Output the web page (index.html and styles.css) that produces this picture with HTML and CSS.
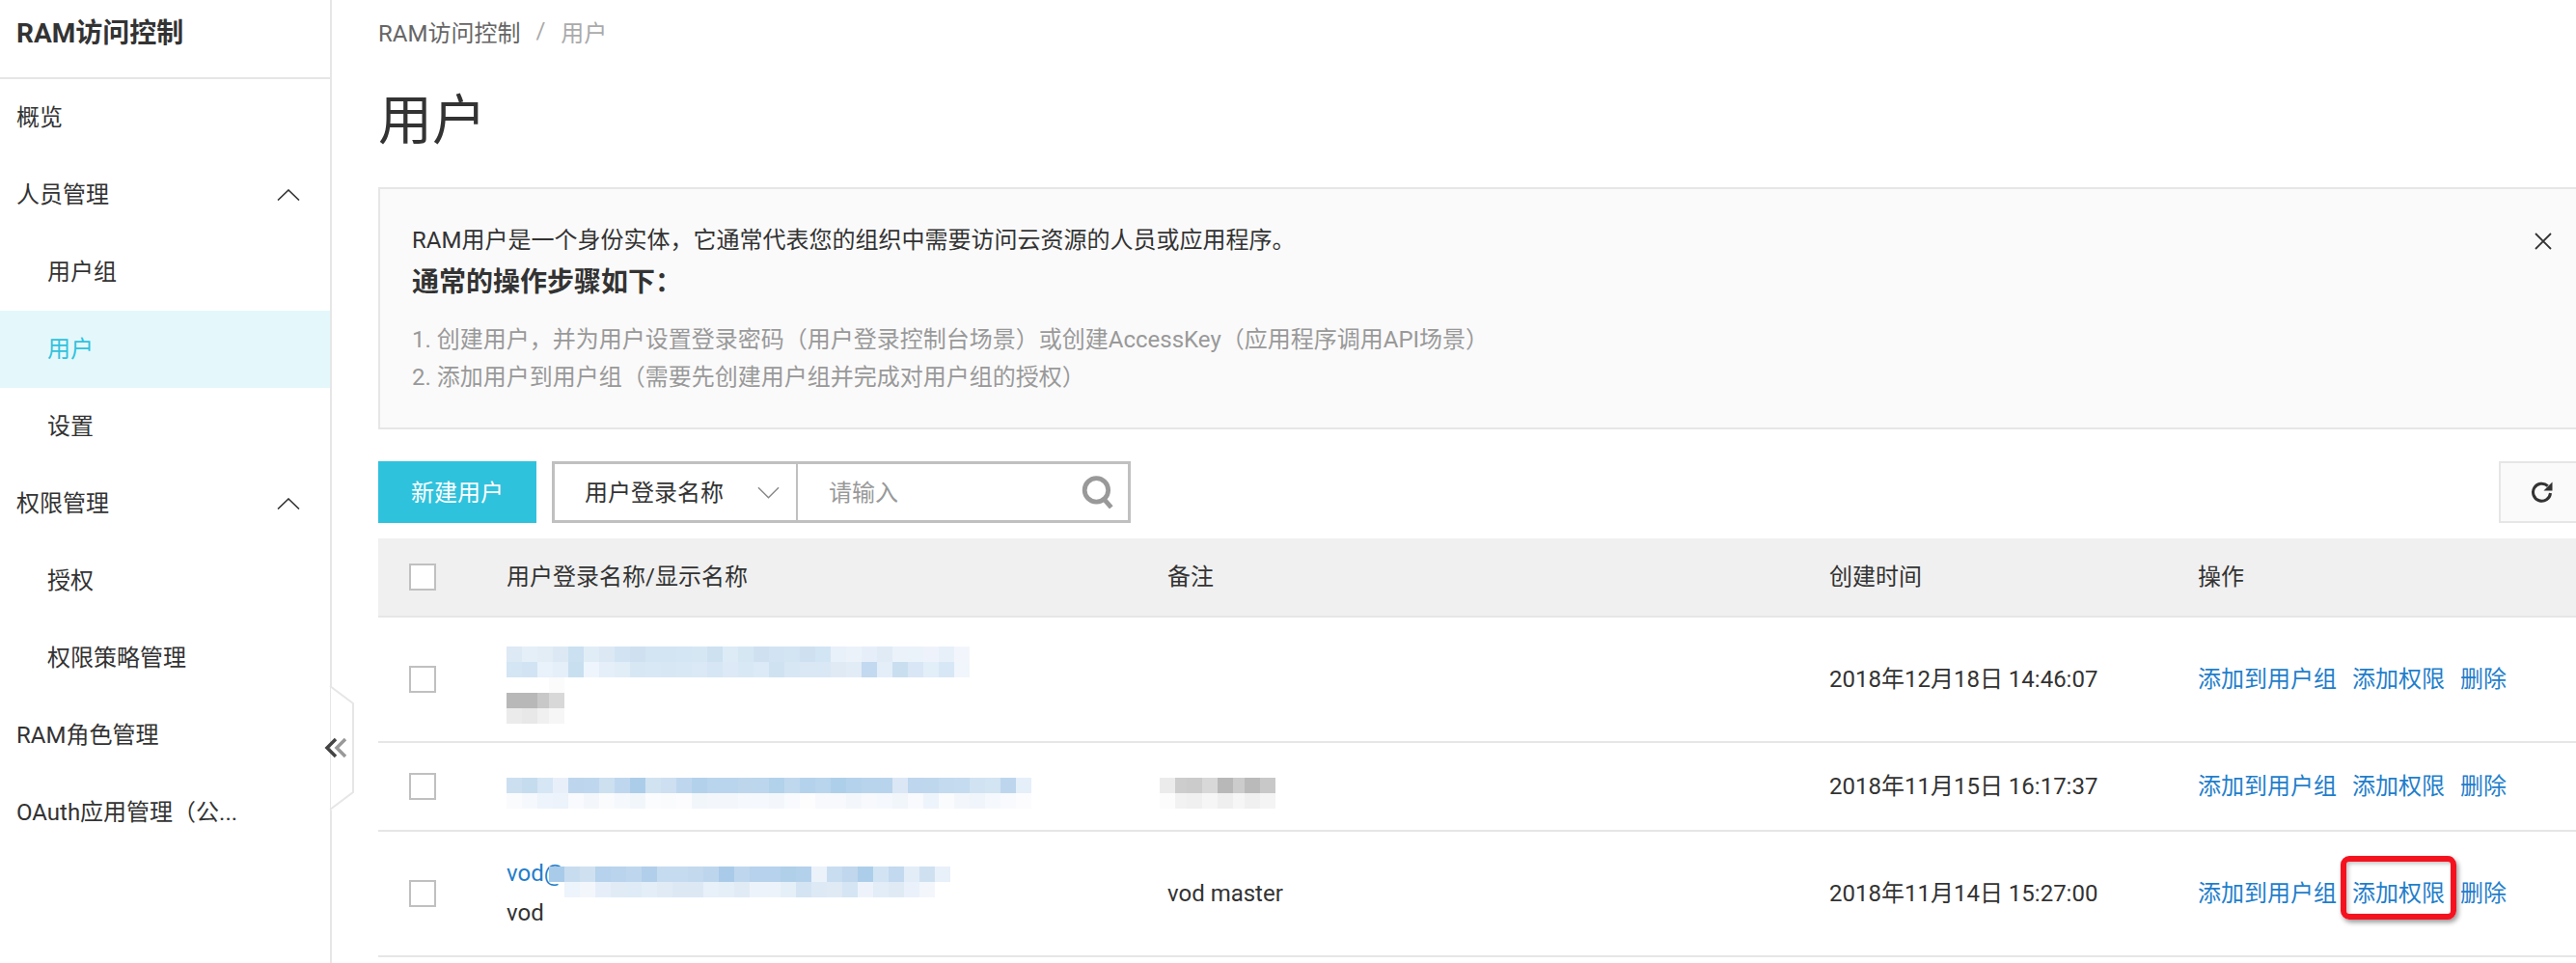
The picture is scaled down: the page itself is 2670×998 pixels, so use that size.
FILE: index.html
```html
<!DOCTYPE html>
<html>
<head>
    <meta charset="utf-8">
    <link rel="stylesheet" href="styles.css">
</head>
<body>
    <aside class="sidebar">
        <div class="side-title">RAM访问控制</div>
        <nav class="side-nav">
            <a class="nav-item">概览</a>
            <a class="nav-item">人员管理
                <svg class="nav-arrow" viewBox="0 0 24 12"><polyline points="1,11.5 12,1 23,11.5"/></svg>
            </a>
            <a class="nav-item sub">用户组</a>
            <a class="nav-item sub active">用户</a>
            <a class="nav-item sub">设置</a>
            <a class="nav-item">权限管理
                <svg class="nav-arrow" viewBox="0 0 24 12"><polyline points="1,11.5 12,1 23,11.5"/></svg>
            </a>
            <a class="nav-item sub">授权</a>
            <a class="nav-item sub">权限策略管理</a>
            <a class="nav-item">RAM角色管理</a>
            <a class="nav-item">OAuth应用管理（公...</a>
        </nav>
        <svg class="collapse" viewBox="0 0 32 132">
            <polygon class="collapse-bg" points="2,2 26,20 26,112 2,130"/>
            <polyline class="collapse-line" points="1,1 25,19 25,111 1,129"/>
            <polyline class="chev-grey" points="17,56 8,65 17,74"/>
            <polyline class="chev-dark" points="7,56 -2,65 7,74"/>
        </svg>
    </aside>

    <main class="main">
        <div class="breadcrumb">
            <span>RAM访问控制</span>
            <span class="crumb-sep">/</span>
            <span class="crumb-last">用户</span>
        </div>
        <h1 class="page-title">用户</h1>

        <section class="notice">
            <p class="notice-lead">RAM用户是一个身份实体，它通常代表您的组织中需要访问云资源的人员或应用程序。</p>
            <h2 class="notice-head">通常的操作步骤如下：</h2>
            <ol class="notice-steps">
                <li>1. 创建用户，并为用户设置登录密码（用户登录控制台场景）或创建AccessKey（应用程序调用API场景）</li>
                <li>2. 添加用户到用户组（需要先创建用户组并完成对用户组的授权）</li>
            </ol>
            <svg class="notice-close" viewBox="0 0 18 18"><path d="M1 1l16 16M17 1L1 17"/></svg>
        </section>

        <div class="toolbar">
            <button class="btn-new">新建用户</button>
            <div class="search">
                <div class="search-type">
                    <span>用户登录名称</span>
                    <svg class="caret" viewBox="0 0 24 13"><polyline points="1,1 12,12 23,1"/></svg>
                </div>
                <div class="search-input">
                    <span>请输入</span>
                    <svg class="search-icon" viewBox="0 0 32 32">
                        <circle cx="14.5" cy="14" r="11.5"/>
                        <path d="M22 23l7 8"/>
                    </svg>
                </div>
            </div>
            <button class="btn-refresh">
                <svg viewBox="0 0 24 24"><path class="refresh-arc" d="M20.5 13a9 9 0 1 1-2.8-7.4"/><path class="refresh-head" d="M22.5 1.5v9h-9z"/></svg>
            </button>
        </div>

        <div class="table">
            <div class="row head">
                <div class="cell"><span class="check"></span></div>
                <div class="cell">用户登录名称/显示名称</div>
                <div class="cell">备注</div>
                <div class="cell">创建时间</div>
                <div class="cell">操作</div>
            </div>
            <div class="row row-a">
                <div class="cell"><span class="check"></span></div>
                <div class="cell name-cell name-blur">
                    <div class="mosaic" data-mosaic="a"></div>
                    <div class="mosaic" data-mosaic="b"></div>
                </div>
                <div class="cell"></div>
                <div class="cell">2018年12月18日 14:46:07</div>
                <div class="cell ops"><a>添加到用户组</a><a>添加权限</a><a>删除</a></div>
            </div>
            <div class="row row-b">
                <div class="cell"><span class="check"></span></div>
                <div class="cell blur-cell"><div class="mosaic" data-mosaic="c"></div></div>
                <div class="cell blur-cell remark-blur"><div class="mosaic" data-mosaic="d"></div></div>
                <div class="cell">2018年11月15日 16:17:37</div>
                <div class="cell ops"><a>添加到用户组</a><a>添加权限</a><a>删除</a></div>
            </div>
            <div class="row row-c">
                <div class="cell"><span class="check"></span></div>
                <div class="cell name-cell vod-cell">
                    <a class="user-link">vod@</a>
                    <span>vod</span>
                    <div class="mosaic vod-blur" data-mosaic="e"></div>
                </div>
                <div class="cell remark-text">vod master</div>
                <div class="cell">2018年11月14日 15:27:00</div>
                <div class="cell ops"><a>添加到用户组</a><a class="marked">添加权限</a><a>删除</a></div>
            </div>
        </div>
    </main>

    <script src="mosaic.js"></script>
</body>
</html>
```

FILE: styles.css
```css
* {
    box-sizing: border-box;
}

html, body {
    height: 100%;
}

body {
    margin: 0;
    display: flex;
    overflow: hidden;
    background: #fff;
    color: #333;
    font-family: Roboto, 'Noto Sans CJK SC', sans-serif;
    font-size: 24px;
}

/* sidebar */
.sidebar {
    position: relative;
    flex: 0 0 344px;
    border-right: 2px solid #e6e6e6;
}

.side-title {
    height: 82px;
    padding-left: 17px;
    line-height: 70px;
    font-size: 28px;
    font-weight: 700;
    border-bottom: 2px solid #e6e6e6;
}

.nav-item {
    display: flex;
    align-items: center;
    justify-content: space-between;
    height: 80px;
    padding: 0 31px 6px 17px;
}

.nav-item.sub {
    padding-left: 49px;
}

.nav-item.active {
    background: #e4f7fb;
    color: #2fc2dd;
}

.nav-arrow {
    width: 24px;
    height: 12px;
    margin-top: 6px;
    fill: none;
    stroke: #333;
    stroke-width: 1.6;
}

.collapse {
    position: absolute;
    left: 341px;
    top: 710px;
    width: 32px;
    height: 132px;
    overflow: visible;
}

.collapse-bg {
    fill: #fff;
}

.collapse-line {
    fill: none;
    stroke: #e6e6e6;
    stroke-width: 2;
}

.chev-dark, .chev-grey {
    fill: none;
    stroke-width: 3.5;
}

.chev-dark {
    stroke: #444;
}

.chev-grey {
    stroke: #999;
}

/* main */
.main {
    flex: 1;
    min-width: 0;
    padding-left: 48px;
}

.breadcrumb {
    display: flex;
    align-items: center;
    gap: 16px;
    height: 66px;
    padding-bottom: 2px;
    color: #666;
}

.crumb-sep, .crumb-last {
    color: #aaa;
}

.page-title {
    margin: 0 0 12px;
    height: 116px;
    line-height: 118px;
    font-size: 56px;
    font-weight: 400;
}

.notice {
    position: relative;
    height: 251px;
    padding: 36px 33px 0;
    background: #fafafa;
    border: 2px solid #e6e6e6;
    border-right: 0;
}

.notice-lead {
    margin: 0;
    line-height: 34px;
}

.notice-head {
    margin: 0;
    line-height: 54px;
    font-size: 28px;
    font-weight: 700;
}

.notice-steps {
    margin: 13px 0 0;
    padding: 0;
    list-style: none;
    line-height: 39px;
    color: #999;
}

.notice-close {
    position: absolute;
    right: 25px;
    top: 45px;
    width: 18px;
    height: 18px;
    fill: none;
    stroke: #333;
    stroke-width: 1.8;
}

.toolbar {
    display: flex;
    gap: 16px;
    height: 64px;
    margin: 33px 0 16px;
}

.btn-new {
    width: 164px;
    padding: 0 0 3px;
    border: 0;
    background: #2fc2dd;
    color: #fff;
    font: inherit;
}

.search {
    display: flex;
    width: 600px;
    border: 3px solid #c0c0c0;
}

.search-type {
    display: flex;
    align-items: center;
    justify-content: space-between;
    width: 252px;
    padding: 0 17px 0 31px;
    border-right: 2px solid #c0c0c0;
}

.search-type span, .search-input span {
    margin-bottom: 3px;
}

.caret {
    width: 23px;
    height: 13px;
    fill: none;
    stroke: #888;
    stroke-width: 1.5;
}

.search-input {
    flex: 1;
    display: flex;
    align-items: center;
    justify-content: space-between;
    padding: 0 14px 0 32px;
    color: #999;
}

.search-icon {
    width: 34px;
    height: 34px;
    fill: none;
    stroke: #999;
    stroke-width: 4.5;
}

.btn-refresh {
    margin-left: auto;
    width: 80px;
    padding: 0 0 0 8px;
    border: 2px solid #e6e6e6;
    border-right: 0;
    background: #fafafa;
}

.btn-refresh svg {
    display: block;
    width: 24px;
    height: 24px;
    margin: 0 auto;
}

.refresh-arc {
    fill: none;
    stroke: #333;
    stroke-width: 3;
}

.refresh-head {
    fill: #333;
}

/* table */
.row {
    display: grid;
    grid-template-columns: 133px 685px 686px 382px 1fr;
    border-bottom: 2px solid #e6e6e6;
}

.row.head {
    height: 82px;
    background: #f0f0f0;
}

.row-a {
    height: 130px;
}

.row-b {
    height: 92px;
}

.row-c {
    height: 130px;
}

.cell {
    position: relative;
    display: flex;
    align-items: center;
    min-width: 0;
    padding-bottom: 5px;
}

.check {
    width: 28px;
    height: 28px;
    margin: 5px 0 0 32px;
    background: #fff;
    border: 2px solid #c0c0c0;
}

.name-cell {
    flex-direction: column;
    align-items: flex-start;
    justify-content: center;
    padding-bottom: 0;
}

.name-blur {
    justify-content: flex-start;
    padding-top: 30px;
}

.blur-cell {
    align-items: flex-start;
    padding: 36px 0 0;
}

.vod-cell {
    gap: 10px;
    line-height: 31px;
}

.user-link {
    color: #1f7ecb;
}

.vod-blur {
    position: absolute;
    left: 44px;
    top: 36px;
}

.remark-blur {
    margin-left: -8px;
}

.remark-text {
    padding-bottom: 0;
}

.ops {
    gap: 16px;
}

.ops a {
    position: relative;
    color: #1f7ecb;
}

/* red marker drawn over the screenshot */
.marked::after {
    content: '';
    position: absolute;
    left: -12px;
    right: -12px;
    top: -19px;
    bottom: -12px;
    border: 6px solid #f5121f;
    border-radius: 9px;
    box-shadow: 2px 3px 5px rgba(0, 0, 0, 0.4), inset 2px 2px 4px rgba(0, 0, 0, 0.25);
}

.mosaic {
    display: flex;
    flex-direction: column;
}

.mosaic-row {
    display: flex;
    height: 16px;
}

.mosaic-row span {
    width: 16px;
}

[data-mosaic="b"] span:nth-child(3),
[data-mosaic="d"] span:nth-child(4n+2) {
    width: 12px;
}
```

FILE: mosaic.js
```js
// blurred-out user names, cell colours row by row
const mosaics = {
    a: [
        'dde9f5 e5eff8 e2edf6 dce9f4 cbe0f0 e1edf6 dce9f5 d2e4f3 cfe1f0 d3e5f3 d3e5f3 d4e5f3 d6e7f4 cde1f0 dcebf6 d6e7f4 cfe1f1 d2e4f3 d3e5f3 cfe1f0 d2e5f4 e8f0f9 ecf2fa e6eff9 e0ebf6 ebf2fa eaf2fa eef3fb e7f0f9 f2f6fc',
        'd4e5f4 d2e4f3 e9f1fa e4eff9 c8dff0 eff5fc e5eff9 e1edf7 d7e7f4 d8e8f5 d7e7f4 d9e8f5 dae9f5 d6e6f4 dde9f6 d9e8f5 dceaf7 cfe2f1 d8e7f4 dae8f5 dae8f5 dfeaf5 e2ecf6 c2d9ef e3eef8 c9dff0 d9e6f5 e2eef8 d8e7f5 f1f5fc'
    ],
    b: [
        'ffffff ffffff ffffff fbfbfb',
        'b8b8b8 b8b8b8 c8c8c8 d8d8d8',
        'ebebeb e8e8e8 f0f0f0 f6f6f6'
    ],
    c: [
        'ccdff0 c5dcef d6e6f4 e8eff9 bdd6ed bfd7ee cce0f0 bfd7ee abcde9 d1e3f1 cddff0 bfd7ee b3d1eb b9d5ed b9d5ed bdd6ec bbd6ed b2d1eb bfd8ee b4d2eb b9d5ed aecfea b4d2eb b8d4ec b8d4ec dbe7f5 bed6ee bfd7ed c3daef c5dbef d1e2f2 d3e4f2 bdd6ee e5eff9',
        'fafbfd f5f8fc eef4fb ecf3fa f9fafd f3f7fb f9fbfd f5f8fc f1f6fb fbfcfe fafbfd fcfcfe f1f6fb f3f7fb f3f7fb f5f8fc f5f8fc f3f7fc f8fafd fdfdfe f7f9fc f7f9fc f3f7fc f7f9fc f5f8fc f1f6fb f9fafd eef4fb f9fbfd f3f7fc f0f5fb f5f8fc f9fafd fcfcfe'
    ],
    d: [
        'ebebeb cdcdcd cbcbcb d8d8d8 b8b8b8 cccccc bababa c8c8c8',
        'fcfcfc f2f2f2 f0f0f0 f6f6f6 efefef f6f6f6 f0f0f0 f4f4f4'
    ],
    e: [
        'a8cbe9 c8dcef cfe1f1 b6d2ec bad4ed bed7ee b1cfeb c5dbf0 c5dbef c2d9ee bed6ed a9cbe9 bfd7ee b6d2ec b6d2ec b0cfe9 b4d1eb ebf2fa c9ddf0 c0d7ee acceea d2e4f3 c2d9ef e3edf8 cfe1f1 e8f0f9',
        'ffffff00 edf4fb f3f7fc e6eff9 e0ebf6 dfebf6 e3eef8 e0ebf6 dce9f5 dce9f5 e8f0f9 e5eff8 e0ebf5 edf3fa edf3fa e5eff8 d5e4f3 dde9f5 dfeaf5 d5e5f3 eef3fb e3edf7 dfeaf5 eaf1fa f3f7fc'
    ]
};

document.querySelectorAll('[data-mosaic]').forEach(el => {
    mosaics[el.dataset.mosaic].forEach(line => {
        const row = document.createElement('div');
        row.className = 'mosaic-row';
        line.split(' ').forEach(color => {
            const cell = document.createElement('span');
            cell.style.background = `#${color}`;
            row.appendChild(cell);
        });
        el.appendChild(row);
    });
});
```
